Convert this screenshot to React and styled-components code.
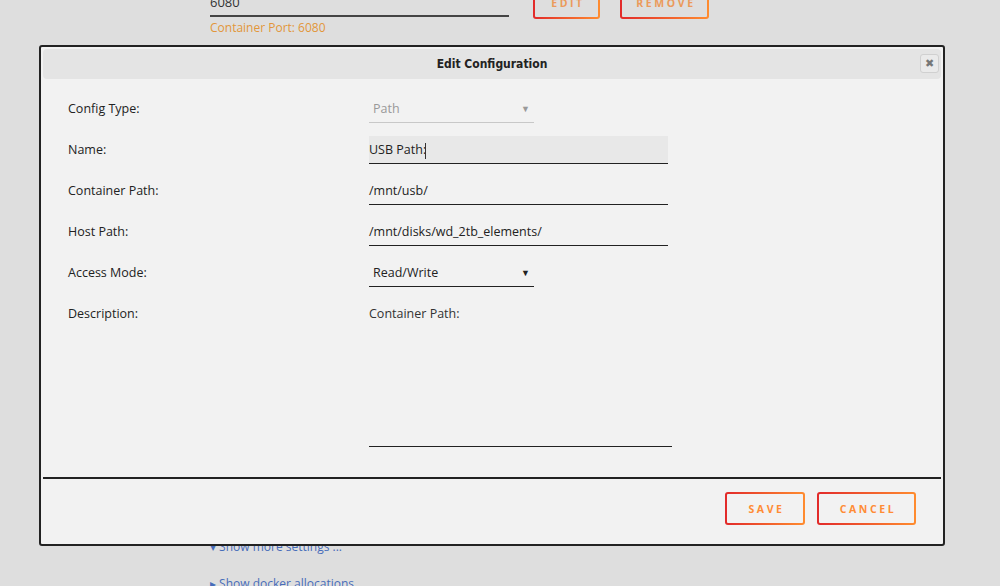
import React from 'react'
import styled, { createGlobalStyle } from 'styled-components'

const Global = createGlobalStyle`
  html, body { margin: 0; padding: 0; }
  body {
    background: #dedede;
    font-family: "Open Sans", "Noto Sans", sans-serif;
    color: #222;
    width: 1000px;
    height: 586px;
    overflow: hidden;
  }
`

const Page = styled.div`
  position: relative;
  width: 1000px;
  height: 586px;
  overflow: hidden;
`

const Behind = styled.div`
  padding-left: 210px;
  margin-top: -13px;
`

const PortRow = styled.div`
  display: flex;
  align-items: flex-start;
  gap: 21px;
`

const PortField = styled.div`
  width: 299px;
  margin-right: 4px;
`

const PortValue = styled.div`
  font-size: 13px;
  line-height: 18px;
  color: #333;
  padding: 6px 0 4px;
  border-bottom: 2px solid #444;
`

const Hint = styled.div`
  font-size: 12px;
  line-height: 16px;
  color: #e2963a;
  margin-top: 3px;
`

const GradButton = styled.button`
  font-family: "Open Sans", sans-serif;
  font-weight: 700;
  font-size: 10.5px;
  letter-spacing: 2.6px;
  color: ${p => (p.$faded ? '#eb9a5b' : '#ff8c36')};
  width: ${p => p.$w}px;
  height: ${p => p.$h}px;
  padding: 0 0 0 3px;
  border: 2px solid transparent;
  border-radius: 3px;
  background:
    linear-gradient(${p => p.$bg}, ${p => p.$bg}) padding-box,
    linear-gradient(90deg, #e22a2a, #ff8c2f) border-box;
  cursor: pointer;
`

const TopButtons = styled.div`
  display: flex;
  gap: 20px;
  margin-left: -1px;
`

const BehindLinks = styled.div`
  margin-top: 502px;
  font-size: 12px;
  line-height: 17px;
  color: #486dba;
  display: flex;
  flex-direction: column;
  gap: 20px;
`

const Dialog = styled.div`
  position: absolute;
  left: 39px;
  top: 45px;
  width: 902px;
  height: 497px;
  border: 2px solid #222;
  border-radius: 3px;
  background: #f2f2f2;
  display: flex;
  flex-direction: column;
`

const TitleBar = styled.div`
  margin: 2px 2px 0;
  height: 30px;
  background: #e4e4e4;
  border-radius: 4px;
  display: flex;
  align-items: center;
  justify-content: center;
  position: relative;
`

const Title = styled.span`
  font-family: "DejaVu Sans Condensed", "Open Sans", sans-serif;
  font-weight: 700;
  font-size: 12px;
  color: #222;
`

const CloseBtn = styled.button`
  position: absolute;
  right: 2px;
  top: 5px;
  width: 19px;
  height: 19px;
  padding: 0;
  border: 1px solid #d0d0d0;
  border-radius: 3px;
  background: #eaeaea;
  color: #777;
  font-size: 11px;
  line-height: 17px;
  display: flex;
  align-items: center;
  justify-content: center;
`

const Form = styled.div`
  flex: 1;
  padding: 16px 0 0 27px;
  display: flex;
  flex-direction: column;
`

const Row = styled.div`
  display: grid;
  grid-template-columns: 301px 1fr;
  align-items: start;
  height: 41px;
`

const Label = styled.div`
  font-size: 12.5px;
  line-height: 28px;
  color: #222;
`

const Input = styled.div`
  width: ${p => p.$w || 299}px;
  height: 28px;
  box-sizing: border-box;
  border-bottom: 1px solid ${p => (p.$light ? '#c8c8c8' : '#222')};
  background: ${p => (p.$focus ? '#e8e8e8' : 'transparent')};
  font-size: 12.5px;
  line-height: 27px;
  padding-left: ${p => (p.$select ? 4 : 0)}px;
  color: ${p => (p.$muted ? '#999' : '#222')};
  display: flex;
  align-items: center;
  justify-content: space-between;
  padding-right: 4px;
`

const Caret = styled.span`
  width: 1px;
  height: 16px;
  background: #333;
  display: inline-block;
  vertical-align: middle;
  margin-left: -1px;
`

const Arrow = styled.span`
  font-size: 9px;
  color: ${p => (p.$muted ? '#999' : '#222')};
`

const TextArea = styled.div`
  width: 303px;
  height: 146px;
  border-bottom: 1.5px solid #222;
  font-size: 12.5px;
  line-height: 28px;
  color: #333;
`

const Footer = styled.div`
  box-sizing: border-box;
  margin: 0 2px;
  border-top: 2px solid #222;
  height: 67px;
  display: flex;
  justify-content: flex-end;
  align-items: flex-start;
  padding: 13px 25px 0 0;
  gap: 12px;
`

export default function App() {
  return (
    <Page>
      <Global />
      <Behind>
        <PortRow>
          <PortField>
            <PortValue>6080</PortValue>
            <Hint>Container Port: 6080</Hint>
          </PortField>
          <TopButtons>
            <GradButton $faded $w={67} $h={32} $bg="#dedede">EDIT</GradButton>
            <GradButton $faded $w={89} $h={32} $bg="#dedede">REMOVE</GradButton>
          </TopButtons>
        </PortRow>
        <BehindLinks>
          <span>&#9662; Show more settings ...</span>
          <span>&#9656; Show docker allocations ...</span>
        </BehindLinks>
      </Behind>

      <Dialog>
        <TitleBar>
          <Title>Edit Configuration</Title>
          <CloseBtn>&#10006;</CloseBtn>
        </TitleBar>
        <Form>
          <Row>
            <Label>Config Type:</Label>
            <Input $w={165} $light $muted $select>
              Path <Arrow $muted>&#9660;</Arrow>
            </Input>
          </Row>
          <Row>
            <Label>Name:</Label>
            <Input $focus>
              <span>USB Path:<Caret /></span>
            </Input>
          </Row>
          <Row>
            <Label>Container Path:</Label>
            <Input>/mnt/usb/</Input>
          </Row>
          <Row>
            <Label>Host Path:</Label>
            <Input>/mnt/disks/wd_2tb_elements/</Input>
          </Row>
          <Row>
            <Label>Access Mode:</Label>
            <Input $w={165} $select>
              Read/Write <Arrow>&#9660;</Arrow>
            </Input>
          </Row>
          <Row>
            <Label>Description:</Label>
            <TextArea>Container Path:</TextArea>
          </Row>
        </Form>
        <Footer>
          <GradButton $w={80} $h={33} $bg="#f2f2f2">SAVE</GradButton>
          <GradButton $w={99} $h={33} $bg="#f2f2f2">CANCEL</GradButton>
        </Footer>
      </Dialog>
    </Page>
  )
}
